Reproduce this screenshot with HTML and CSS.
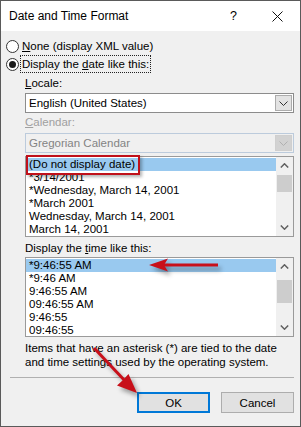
FILE: index.html
```html
<!DOCTYPE html>
<html lang="en">
<head>
    <meta charset="UTF-8">
    <title>Date and Time Format</title>
    <link rel="stylesheet" href="styles.css">
</head>
<body>
    <div class="window">
        <div class="titlebar">
            <span class="title">Date and Time Format</span>
            <span class="help">?</span>
            <svg class="close" width="11" height="11" viewBox="0 0 11 11">
                <path d="M0.5 0.5 L10.5 10.5 M10.5 0.5 L0.5 10.5" stroke="#111" stroke-width="1" fill="none"/>
            </svg>
        </div>

        <div class="content">
            <div class="radio-row">
                <span class="radio"></span>
                <span><u>N</u>one (display XML value)</span>
            </div>
            <div class="radio-row">
                <span class="radio checked"></span>
                <span class="focus">Display the <u>d</u>ate like this:</span>
            </div>

            <div class="group">
                <div class="label locale-label"><u>L</u>ocale:</div>
                <div class="select">
                    <span class="select-text">English (United States)</span>
                    <span class="drop">
                        <svg width="9" height="5" viewBox="0 0 9 5"><path d="M0.5 0.5 L4.5 4.5 L8.5 0.5" stroke="#333" fill="none"/></svg>
                    </span>
                </div>

                <div class="label disabled calendar-label"><u>C</u>alendar:</div>
                <div class="select disabled">
                    <span class="select-text">Gregorian Calendar</span>
                    <span class="drop">
                        <svg width="9" height="5" viewBox="0 0 9 5"><path d="M0.5 0.5 L4.5 4.5 L8.5 0.5" stroke="#b0b0b0" fill="none"/></svg>
                    </span>
                </div>

                <div class="listbox date-list">
                    <div class="items">
                        <div class="item selected">(Do not display date)</div>
                        <div class="item">*3/14/2001</div>
                        <div class="item">*Wednesday, March 14, 2001</div>
                        <div class="item">*March 2001</div>
                        <div class="item">Wednesday, March 14, 2001</div>
                        <div class="item">March 14, 2001</div>
                    </div>
                    <div class="scrollbar">
                        <span class="sb-btn">
                            <svg width="9" height="5" viewBox="0 0 9 5"><path d="M0.8 4.5 L4.5 0.8 L8.2 4.5" stroke="#606060" stroke-width="1.5" fill="none"/></svg>
                        </span>
                        <span class="track"><span class="thumb date-thumb"></span></span>
                        <span class="sb-btn">
                            <svg width="9" height="5" viewBox="0 0 9 5"><path d="M0.8 0.5 L4.5 4.2 L8.2 0.5" stroke="#606060" stroke-width="1.5" fill="none"/></svg>
                        </span>
                    </div>
                    <div class="callout"></div>
                </div>

                <div class="label time-label">Display the <u>t</u>ime like this:</div>
                <div class="listbox time-list">
                    <div class="items">
                        <div class="item selected">*9:46:55 AM</div>
                        <div class="item">*9:46 AM</div>
                        <div class="item">9:46:55 AM</div>
                        <div class="item">09:46:55 AM</div>
                        <div class="item">9:46:55</div>
                        <div class="item">09:46:55</div>
                    </div>
                    <div class="scrollbar">
                        <span class="sb-btn">
                            <svg width="9" height="5" viewBox="0 0 9 5"><path d="M0.8 4.5 L4.5 0.8 L8.2 4.5" stroke="#606060" stroke-width="1.5" fill="none"/></svg>
                        </span>
                        <span class="track"><span class="thumb time-thumb"></span></span>
                        <span class="sb-btn">
                            <svg width="9" height="5" viewBox="0 0 9 5"><path d="M0.8 0.5 L4.5 4.2 L8.2 0.5" stroke="#606060" stroke-width="1.5" fill="none"/></svg>
                        </span>
                    </div>
                </div>

                <p class="note">Items that have an asterisk (*) are tied to the date and time settings used by the operating system.</p>
            </div>

            <div class="separator"></div>

            <div class="buttons">
                <button class="btn default">OK</button>
                <button class="btn">Cancel</button>
            </div>
        </div>

        <!-- annotation arrows drawn over the dialog -->
        <svg class="arrows" width="301" height="427" viewBox="0 0 301 427">
            <line x1="218" y1="265" x2="162" y2="265" stroke="#c8101a" stroke-width="3"/>
            <polygon points="149,265 168,258.5 164,265 168,271.5" fill="#c8101a"/>
            <line x1="94" y1="348" x2="127" y2="383" stroke="#c8101a" stroke-width="3"/>
            <polygon points="137,393 117,385.5 123,380 128.5,374" fill="#c8101a"/>
        </svg>
    </div>
</body>
</html>
```

FILE: styles.css
```css
body {
    margin: 0;
    background: #fff;
}
.window {
    position: relative;
    width: 301px;
    height: 427px;
    box-sizing: border-box;
    border: 1px solid #5a5a5a;
    background: #f0f0f0;
    font-family: "Liberation Sans", Arial, sans-serif;
    font-size: 11.5px;
    color: #000;
}
.titlebar {
    display: flex;
    align-items: center;
    height: 30px;
    background: #fff;
}
.title {
    flex: 1;
    padding-left: 8px;
    font-size: 12px;
}
.help {
    width: 8px;
    margin-right: 34px;
    font-size: 12.5px;
}
.close {
    margin-right: 17px;
}
.content {
    padding-top: 6px;
}
.radio-row {
    display: flex;
    align-items: center;
    gap: 3px;
    height: 18px;
    padding-left: 5px;
}
.radio {
    width: 13px;
    height: 13px;
    box-sizing: border-box;
    border: 1px solid #333;
    border-radius: 50%;
    background: #fff;
    display: flex;
    align-items: center;
    justify-content: center;
}
.radio.checked::after {
    content: "";
    width: 7px;
    height: 7px;
    border-radius: 50%;
    background: #1a1a1a;
}
.focus {
    outline: 1px dotted #222;
    outline-offset: 0;
    padding: 0 1px;
    margin-left: -1px;
    line-height: 16px;
}
.group {
    padding: 0 6px 0 24px;
}
.label {
    line-height: 14px;
    white-space: nowrap;
}
.label.disabled {
    color: #a0a0a0;
}
.locale-label {
    margin-top: 3px;
}
.calendar-label {
    margin-top: 2px;
}
.time-label {
    margin-top: 4px;
}
.select {
    display: flex;
    align-items: center;
    height: 20px;
    box-sizing: border-box;
    margin-top: 3px;
    border: 1px solid #8c8c8c;
    background: #fff;
}
.select.disabled {
    margin-top: 4px;
    border-color: #bccbdc;
    background: #f0f0f0;
    color: #838383;
}
.select-text {
    flex: 1;
    padding-left: 3px;
}
.drop {
    display: flex;
    align-items: center;
    justify-content: center;
    width: 17px;
    height: 16px;
    box-sizing: border-box;
    margin-right: 1px;
    border: 1px solid #acacac;
    background: #e3e3e3;
}
.select.disabled .drop {
    border-color: #cfcfcf;
    background: #d2d2d2;
}
.listbox {
    position: relative;
    display: flex;
    box-sizing: border-box;
    border: 1px solid #9a9a9a;
    background: #fff;
}
.date-list {
    height: 81px;
    margin-top: 3px;
}
.time-list {
    height: 80px;
    margin-top: 2px;
}
.items {
    flex: 1;
    padding-top: 1px;
}
.item {
    height: 13px;
    line-height: 13px;
    padding-left: 3px;
    white-space: nowrap;
}
.item.selected {
    background: #99c9ef;
}
.scrollbar {
    display: flex;
    flex-direction: column;
    width: 17px;
    background: #f0f0f0;
}
.sb-btn {
    display: flex;
    align-items: center;
    justify-content: center;
    height: 17px;
}
.track {
    flex: 1;
}
.thumb {
    display: block;
    margin: 0 1px;
    background: #cdcdcd;
}
.date-thumb {
    margin-top: 1px;
    height: 17px;
}
.time-thumb {
    margin-top: 5px;
    height: 23px;
}
.callout {
    position: absolute;
    left: 0;
    top: -2px;
    width: 114px;
    height: 20px;
    box-sizing: border-box;
    border: 2px solid #c0101a;
    box-shadow: 2px 2px 3px rgba(0, 0, 0, 0.3);
}
.note {
    margin: 4px 0 0;
    line-height: 14px;
}
.separator {
    margin: 8px 6px 0 9px;
    border-top: 1px solid #b0b0b0;
}
.buttons {
    display: flex;
    justify-content: flex-end;
    gap: 11px;
    margin: 14px 6px 0 0;
}
.btn {
    width: 73px;
    height: 21px;
    box-sizing: border-box;
    border: 1px solid #adadad;
    background: #e1e1e1;
    font-family: inherit;
    font-size: 11.5px;
    color: #000;
    padding: 0;
}
.btn.default {
    border: 2px solid #0078d7;
}
.arrows {
    position: absolute;
    left: -1px;
    top: -1px;
    pointer-events: none;
    filter: drop-shadow(3px 4px 2px rgba(0, 0, 0, 0.35));
}
```
